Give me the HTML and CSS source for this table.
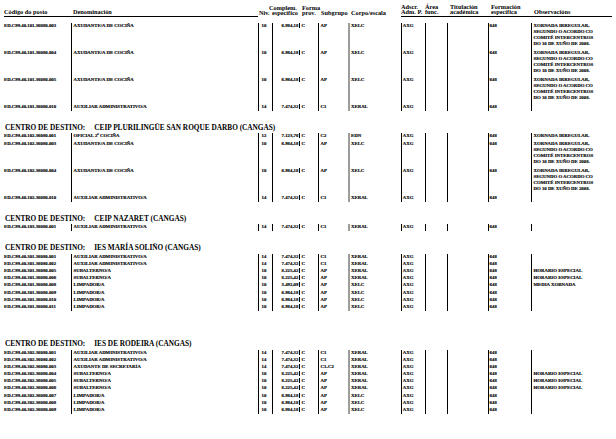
FILE: index.html
```html
<!DOCTYPE html>
<html lang="gl">
<head>
<meta charset="utf-8">
<title>Relación de postos</title>
<link rel="stylesheet" href="styles.css">
</head>
<body>
<div class="page">
  <div class="row head">
    <div class="h rule">Código do posto</div>
    <div class="h rule">Denominación</div>
    <div class="h niv">Niv.</div>
    <div class="h comp"><span class="shift">Complem.</span><span>específico</span></div>
    <div class="h"><span>Forma</span><span>prov.</span></div>
    <div class="h sub">Subgrupo</div>
    <div class="h">Corpo/escala</div>
    <div class="h rule"><span>Adscr.</span><span>Adm. P.</span></div>
    <div class="h rule"><span>Área</span><span>func.</span></div>
    <div class="h rule tit"><span>Titulación</span><span>académica</span></div>
    <div class="h rule form"><span>Formación</span><span>específica</span></div>
    <div class="h rule obs-h">Observacións</div>
  </div>

  <div class="sec first">
    <div class="row r"><div class="c">ED.C99.40.101.36080.003</div><div class="d">AXUDANTE/A DE COCIÑA</div><div class="n">10</div><div class="v"><span>6.984,18</span></div><div class="f">C</div><div class="s">AP</div><div class="k">XELC</div><div class="a">AXG</div><div class="b"></div><div class="t"></div><div class="m">648</div><div class="o multi">XORNADA IRREGULAR,<br>SEGUNDO O ACORDO CO<br>COMITÉ INTERCENTROS<br>DO 10 DE XUÑO DE 2008.</div></div>
    <div class="row r"><div class="c">ED.C99.40.101.36080.004</div><div class="d">AXUDANTE/A DE COCIÑA</div><div class="n">10</div><div class="v"><span>6.984,18</span></div><div class="f">C</div><div class="s">AP</div><div class="k">XELC</div><div class="a">AXG</div><div class="b"></div><div class="t"></div><div class="m">648</div><div class="o multi">XORNADA IRREGULAR,<br>SEGUNDO O ACORDO CO<br>COMITÉ INTERCENTROS<br>DO 10 DE XUÑO DE 2008.</div></div>
    <div class="row r"><div class="c">ED.C99.40.101.36080.005</div><div class="d">AXUDANTE/A DE COCIÑA</div><div class="n">10</div><div class="v"><span>6.984,18</span></div><div class="f">C</div><div class="s">AP</div><div class="k">XELC</div><div class="a">AXG</div><div class="b"></div><div class="t"></div><div class="m">648</div><div class="o multi">XORNADA IRREGULAR,<br>SEGUNDO O ACORDO CO<br>COMITÉ INTERCENTROS<br>DO 10 DE XUÑO DE 2008.</div></div>
    <div class="row r"><div class="c">ED.C99.40.101.36080.010</div><div class="d">AUXILIAR ADMINISTRATIVO/A</div><div class="n">14</div><div class="v"><span>7.474,32</span></div><div class="f">C</div><div class="s">C1</div><div class="k">XERAL</div><div class="a">AXG</div><div class="b"></div><div class="t"></div><div class="m">648</div><div class="o"></div></div>
  </div>

  <h2 class="centro"><span>CENTRO DE DESTINO:</span><span class="nome">CEIP PLURILINGÜE SAN ROQUE DARBO (CANGAS)</span></h2>
  <div class="sec">
    <div class="row r"><div class="c">ED.C99.40.102.36080.001</div><div class="d">OFICIAL 2ª COCIÑA</div><div class="n">12</div><div class="v"><span>7.123,76</span></div><div class="f">C</div><div class="s">C2</div><div class="k">EDN</div><div class="a">AXG</div><div class="b"></div><div class="t"></div><div class="m">648</div><div class="o">XORNADA IRREGULAR.</div></div>
    <div class="row r"><div class="c">ED.C99.40.102.36080.003</div><div class="d">AXUDANTE/A DE COCIÑA</div><div class="n">10</div><div class="v"><span>6.984,18</span></div><div class="f">C</div><div class="s">AP</div><div class="k">XELC</div><div class="a">AXG</div><div class="b"></div><div class="t"></div><div class="m">648</div><div class="o multi">XORNADA IRREGULAR,<br>SEGUNDO O ACORDO CO<br>COMITÉ INTERCENTROS<br>DO 10 DE XUÑO DE 2008.</div></div>
    <div class="row r"><div class="c">ED.C99.40.102.36080.004</div><div class="d">AXUDANTE/A DE COCIÑA</div><div class="n">10</div><div class="v"><span>6.984,18</span></div><div class="f">C</div><div class="s">AP</div><div class="k">XELC</div><div class="a">AXG</div><div class="b"></div><div class="t"></div><div class="m">648</div><div class="o multi">XORNADA IRREGULAR,<br>SEGUNDO O ACORDO CO<br>COMITÉ INTERCENTROS<br>DO 10 DE XUÑO DE 2008.</div></div>
    <div class="row r"><div class="c">ED.C99.40.102.36080.010</div><div class="d">AUXILIAR ADMINISTRATIVO/A</div><div class="n">14</div><div class="v"><span>7.474,32</span></div><div class="f">C</div><div class="s">C1</div><div class="k">XERAL</div><div class="a">AXG</div><div class="b"></div><div class="t"></div><div class="m">648</div><div class="o"></div></div>
  </div>

  <h2 class="centro"><span>CENTRO DE DESTINO:</span><span class="nome">CEIP NAZARET (CANGAS)</span></h2>
  <div class="sec">
    <div class="row r"><div class="c">ED.C99.40.103.36080.001</div><div class="d">AUXILIAR ADMINISTRATIVO/A</div><div class="n">14</div><div class="v"><span>7.474,32</span></div><div class="f">C</div><div class="s">C1</div><div class="k">XERAL</div><div class="a">AXG</div><div class="b"></div><div class="t"></div><div class="m">648</div><div class="o"></div></div>
  </div>

  <h2 class="centro"><span>CENTRO DE DESTINO:</span><span class="nome">IES MARÍA SOLIÑO (CANGAS)</span></h2>
  <div class="sec">
    <div class="row r"><div class="c">ED.C99.40.301.36080.001</div><div class="d">AUXILIAR ADMINISTRATIVO/A</div><div class="n">14</div><div class="v"><span>7.474,32</span></div><div class="f">C</div><div class="s">C1</div><div class="k">XERAL</div><div class="a">AXG</div><div class="b"></div><div class="t"></div><div class="m">648</div><div class="o"></div></div>
    <div class="row r"><div class="c">ED.C99.40.301.36080.002</div><div class="d">AUXILIAR ADMINISTRATIVO/A</div><div class="n">14</div><div class="v"><span>7.474,32</span></div><div class="f">C</div><div class="s">C1</div><div class="k">XERAL</div><div class="a">AXG</div><div class="b"></div><div class="t"></div><div class="m">648</div><div class="o"></div></div>
    <div class="row r"><div class="c">ED.C99.40.301.36080.005</div><div class="d">SUBALTERNO/A</div><div class="n">10</div><div class="v"><span>8.225,42</span></div><div class="f">C</div><div class="s">AP</div><div class="k">XERAL</div><div class="a">AXG</div><div class="b"></div><div class="t"></div><div class="m">648</div><div class="o">HORARIO ESPECIAL</div></div>
    <div class="row r"><div class="c">ED.C99.40.301.36080.006</div><div class="d">SUBALTERNO/A</div><div class="n">10</div><div class="v"><span>8.225,42</span></div><div class="f">C</div><div class="s">AP</div><div class="k">XERAL</div><div class="a">AXG</div><div class="b"></div><div class="t"></div><div class="m">648</div><div class="o">HORARIO ESPECIAL</div></div>
    <div class="row r"><div class="c">ED.C99.40.301.36080.008</div><div class="d">LIMPADOR/A</div><div class="n">10</div><div class="v"><span>3.492,09</span></div><div class="f">C</div><div class="s">AP</div><div class="k">XELC</div><div class="a">AXG</div><div class="b"></div><div class="t"></div><div class="m">648</div><div class="o">MEDIA XORNADA</div></div>
    <div class="row r"><div class="c">ED.C99.40.301.36080.009</div><div class="d">LIMPADOR/A</div><div class="n">10</div><div class="v"><span>6.984,18</span></div><div class="f">C</div><div class="s">AP</div><div class="k">XELC</div><div class="a">AXG</div><div class="b"></div><div class="t"></div><div class="m">648</div><div class="o"></div></div>
    <div class="row r"><div class="c">ED.C99.40.301.36080.010</div><div class="d">LIMPADOR/A</div><div class="n">10</div><div class="v"><span>6.984,18</span></div><div class="f">C</div><div class="s">AP</div><div class="k">XELC</div><div class="a">AXG</div><div class="b"></div><div class="t"></div><div class="m">648</div><div class="o"></div></div>
    <div class="row r"><div class="c">ED.C99.40.301.36080.011</div><div class="d">LIMPADOR/A</div><div class="n">10</div><div class="v"><span>6.984,18</span></div><div class="f">C</div><div class="s">AP</div><div class="k">XELC</div><div class="a">AXG</div><div class="b"></div><div class="t"></div><div class="m">648</div><div class="o"></div></div>
  </div>

  <h2 class="centro late"><span>CENTRO DE DESTINO:</span><span class="nome">IES DE RODEIRA (CANGAS)</span></h2>
  <div class="sec">
    <div class="row r"><div class="c">ED.C99.40.302.36080.001</div><div class="d">AUXILIAR ADMINISTRATIVO/A</div><div class="n">14</div><div class="v"><span>7.474,32</span></div><div class="f">C</div><div class="s">C1</div><div class="k">XERAL</div><div class="a">AXG</div><div class="b"></div><div class="t"></div><div class="m">648</div><div class="o"></div></div>
    <div class="row r"><div class="c">ED.C99.40.302.36080.002</div><div class="d">AUXILIAR ADMINISTRATIVO/A</div><div class="n">14</div><div class="v"><span>7.474,32</span></div><div class="f">C</div><div class="s">C1</div><div class="k">XERAL</div><div class="a">AXG</div><div class="b"></div><div class="t"></div><div class="m">648</div><div class="o"></div></div>
    <div class="row r"><div class="c">ED.C99.40.302.36080.003</div><div class="d">AXUDANTE DE SECRETARÍA</div><div class="n">14</div><div class="v"><span>7.474,32</span></div><div class="f">C</div><div class="s">C1-C2</div><div class="k">XERAL</div><div class="a">AXG</div><div class="b"></div><div class="t"></div><div class="m">648</div><div class="o"></div></div>
    <div class="row r"><div class="c">ED.C99.40.302.36080.004</div><div class="d">SUBALTERNO/A</div><div class="n">10</div><div class="v"><span>8.225,42</span></div><div class="f">C</div><div class="s">AP</div><div class="k">XERAL</div><div class="a">AXG</div><div class="b"></div><div class="t"></div><div class="m">648</div><div class="o">HORARIO ESPECIAL</div></div>
    <div class="row r"><div class="c">ED.C99.40.302.36080.005</div><div class="d">SUBALTERNO/A</div><div class="n">10</div><div class="v"><span>8.225,42</span></div><div class="f">C</div><div class="s">AP</div><div class="k">XERAL</div><div class="a">AXG</div><div class="b"></div><div class="t"></div><div class="m">648</div><div class="o">HORARIO ESPECIAL</div></div>
    <div class="row r"><div class="c">ED.C99.40.302.36080.006</div><div class="d">SUBALTERNO/A</div><div class="n">10</div><div class="v"><span>8.225,42</span></div><div class="f">C</div><div class="s">AP</div><div class="k">XERAL</div><div class="a">AXG</div><div class="b"></div><div class="t"></div><div class="m">648</div><div class="o">HORARIO ESPECIAL</div></div>
    <div class="row r"><div class="c">ED.C99.40.302.36080.007</div><div class="d">LIMPADOR/A</div><div class="n">10</div><div class="v"><span>6.984,18</span></div><div class="f">C</div><div class="s">AP</div><div class="k">XELC</div><div class="a">AXG</div><div class="b"></div><div class="t"></div><div class="m">648</div><div class="o"></div></div>
    <div class="row r"><div class="c">ED.C99.40.302.36080.008</div><div class="d">LIMPADOR/A</div><div class="n">10</div><div class="v"><span>6.984,18</span></div><div class="f">C</div><div class="s">AP</div><div class="k">XELC</div><div class="a">AXG</div><div class="b"></div><div class="t"></div><div class="m">648</div><div class="o"></div></div>
    <div class="row r"><div class="c">ED.C99.40.302.36080.009</div><div class="d">LIMPADOR/A</div><div class="n">10</div><div class="v"><span>6.984,18</span></div><div class="f">C</div><div class="s">AP</div><div class="k">XELC</div><div class="a">AXG</div><div class="b"></div><div class="t"></div><div class="m">648</div><div class="o"></div></div>
  </div>
</div>
</body>
</html>
```
FILE: styles.css
```css
* { box-sizing: border-box; }

body {
  margin: 0;
  background: #fff;
  color: #000;
  font-family: "Liberation Serif", "Times New Roman", serif;
  font-weight: bold;
}

.page {
  width: 616px;
  padding: 3.5px 4px 0 4px;
}

.row {
  display: grid;
  grid-template-columns: 67px 187px 14px 28px 18px 30px 53px 24px 22px 41px 43px 81px;
}

/* header */
.head {
  font-size: 6.3px;
  line-height: 5.5px;
}

.h {
  display: flex;
  flex-direction: column;
  justify-content: flex-end;
  white-space: nowrap;
  padding-bottom: 1.5px;
}

.h.rule { border-bottom: 1px solid #000; }
.h:nth-child(2) { padding-left: 2px; }
.h.niv { padding-left: 1px; }
.h.comp .shift { margin-left: -3px; }
.h:nth-child(5) { padding-left: 2px; }
.h.sub { padding-left: 3px; }
.h:nth-child(7) { padding-left: 3px; }
.h.tit { padding-left: 3px; }
.h.form { padding-left: 3px; }
.h.obs-h { padding-left: 3px; }

/* sections */
.sec.first { margin-top: 5.7px; }

.centro {
  margin: 12px 0 1.5px;
  padding-left: 1px;
  font-size: 7.3px;
  line-height: 9px;
  font-weight: bold;
  white-space: nowrap;
}

.centro.late { margin-top: 28px; }

.centro .nome { margin-left: 9px; }

/* data rows */
.r {
  font-size: 4.8px;
  line-height: 6.65px;
  -webkit-text-stroke: 0.15px #000;
}

.r > div {
  padding-bottom: 0.5px;
  white-space: nowrap;
}

.r .d { border-left: 1px solid #000; padding-left: 1.5px; }
.r .n { border-left: 1px solid #000; padding-left: 2.5px; }
.r .v { border-left: 1px solid #000; text-align: right; }
.r .v span { border-right: 1px solid #000; padding-right: 0.6px; }
.r .f { padding-left: 1.6px; }
.r .s { border-left: 1px solid #000; padding-left: 1.5px; }
.r .k { border-left: 2px solid #9c9c9c; padding-left: 1px; }
.r .a { border-left: 1px solid #000; padding-left: 0.8px; }
.r .b { border-left: 1px solid #000; }
.r .t { border-left: 1px solid #000; }
.r .m { border-left: 1px solid #000; padding-left: 0.6px; }
.r .o { border-left: 1.5px solid #000; padding-left: 1.5px; }
.r .o.multi { line-height: 6px; padding-bottom: 3px; }
```
